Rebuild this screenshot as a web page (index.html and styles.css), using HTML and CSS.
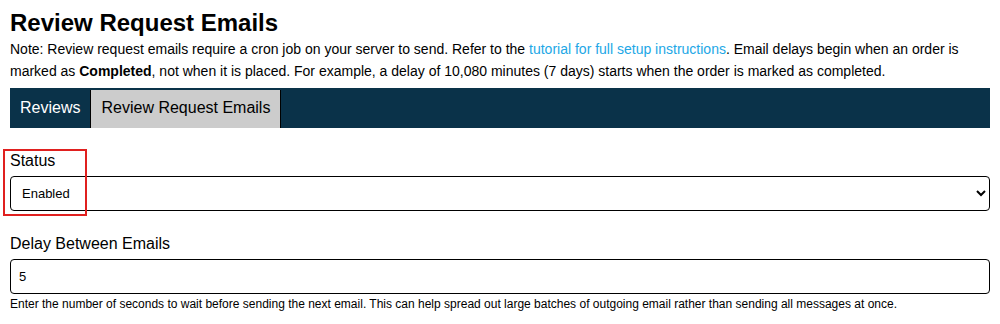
FILE: index.html
```html
<!DOCTYPE html>
<html lang="en">
<head>
    <meta charset="UTF-8">
    <meta name="viewport" content="width=device-width, initial-scale=1.0">
    <title>Review Request Emails</title>
    <link rel="stylesheet" href="styles.css">
</head>
<body>
    <div class="page">
        <h1>Review Request Emails</h1>
        <p class="note">Note: Review request emails require a cron job on your server to send. Refer to the <a href="#">tutorial for full setup instructions</a>. Email delays begin when an order is marked as <b>Completed</b>, not when it is placed. For example, a delay of 10,080 minutes (7 days) starts when the order is marked as completed.</p>

        <!-- Onglets -->
        <div class="tabs">
            <a class="tab" href="#">Reviews</a>
            <a class="tab active" href="#">Review Request Emails</a>
        </div>

        <div class="field field-status">
            <label for="status">Status</label>
            <select id="status">
                <option>Enabled</option>
                <option>Disabled</option>
            </select>
            <span class="highlight"></span>
        </div>

        <div class="field">
            <label for="delay">Delay Between Emails</label>
            <input id="delay" type="text" value="5">
            <p class="help">Enter the number of seconds to wait before sending the next email. This can help spread out large batches of outgoing email rather than sending all messages at once.</p>
        </div>
    </div>
</body>
</html>
```

FILE: styles.css
```css
/* Base */
* {
    box-sizing: border-box;
}

body {
    margin: 0;
    font-family: "Liberation Sans", Arial, sans-serif;
    color: #000;
    background: #fff;
}

.page {
    padding: 8px 10px 0;
}

h1 {
    margin: 0;
    font-size: 24px;
    line-height: 30px;
}

.note {
    margin: 0;
    font-size: 14px;
    line-height: 22px;
}

.note a {
    color: #22a7e6;
    text-decoration: none;
}

/* Onglets */
.tabs {
    display: flex;
    align-items: flex-end;
    height: 40px;
    margin-top: 6px;
    background-color: #0a3249;
}

.tab {
    height: 38px;
    line-height: 36px;
    padding: 0 10px;
    font-size: 16px;
    color: #fff;
    text-decoration: none;
}

.tab.active {
    background-color: #cccccc;
    color: #000;
    border-left: 1px solid #000;
    border-right: 1px solid #000;
}

/* Formulaire */
.field {
    position: relative;
    margin-top: 22px;
}

.field label {
    display: block;
    font-size: 16px;
    line-height: 21px;
    margin-bottom: 5px;
}

.field select,
.field input {
    display: block;
    width: 100%;
    height: 35px;
    border: 1px solid #000;
    border-radius: 4px;
    background: #fff;
    font-family: "Liberation Sans", Arial, sans-serif;
    font-size: 13px;
    color: #000;
}

.field select {
    padding: 0 7px;
}

.field input {
    padding: 0 8px;
}

.help {
    margin: 3px 0 0;
    font-size: 12px;
    line-height: 14px;
}

.highlight {
    position: absolute;
    left: -7px;
    top: -1px;
    width: 84px;
    height: 67px;
    border: 2px solid #e0201f;
    pointer-events: none;
}
```
